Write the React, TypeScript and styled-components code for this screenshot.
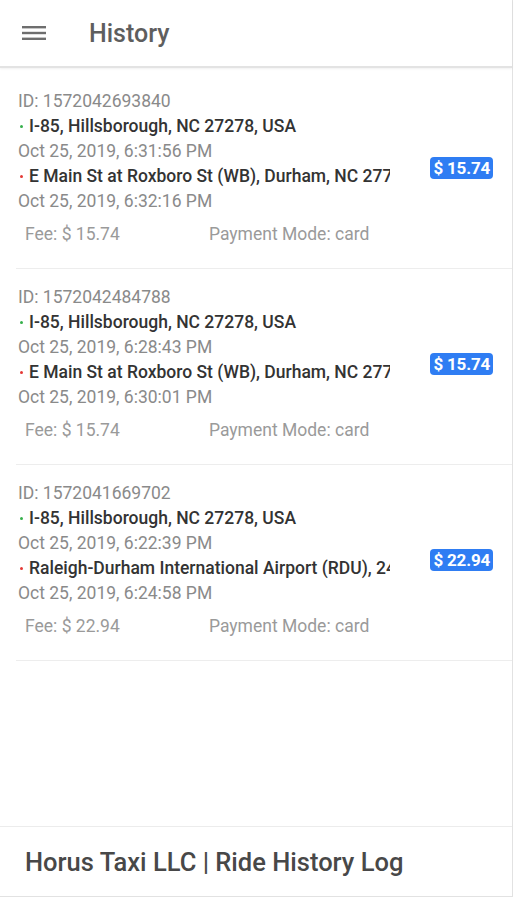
import styled, { createGlobalStyle } from "styled-components";

const GlobalStyle = createGlobalStyle`
  html, body {
    margin: 0;
    padding: 0;
    background: #fff;
  }
  body {
    font-family: Roboto, "Liberation Sans", sans-serif;
  }
`;

type Ride = {
  id: string;
  origin: string;
  pickedAt: string;
  destination: string;
  droppedAt: string;
  fee: string;
  mode: string;
};

const rides: Ride[] = [
  {
    id: "1572042693840",
    origin: "I-85, Hillsborough, NC 27278, USA",
    pickedAt: "Oct 25, 2019, 6:31:56 PM",
    destination: "E Main St at Roxboro St (WB), Durham, NC 27701, USA",
    droppedAt: "Oct 25, 2019, 6:32:16 PM",
    fee: "15.74",
    mode: "card",
  },
  {
    id: "1572042484788",
    origin: "I-85, Hillsborough, NC 27278, USA",
    pickedAt: "Oct 25, 2019, 6:28:43 PM",
    destination: "E Main St at Roxboro St (WB), Durham, NC 27701, USA",
    droppedAt: "Oct 25, 2019, 6:30:01 PM",
    fee: "15.74",
    mode: "card",
  },
  {
    id: "1572041669702",
    origin: "I-85, Hillsborough, NC 27278, USA",
    pickedAt: "Oct 25, 2019, 6:22:39 PM",
    destination: "Raleigh-Durham International Airport (RDU), 2400 John Brantley Blvd",
    droppedAt: "Oct 25, 2019, 6:24:58 PM",
    fee: "22.94",
    mode: "card",
  },
];

const Shell = styled.div`
  width: 512px;
  height: 896px;
  display: flex;
  flex-direction: column;
  border-right: 1px solid #e2e2e2;
  border-bottom: 1px solid #e2e2e2;
  background: #fff;
`;

const Header = styled.header`
  height: 66px;
  flex-shrink: 0;
  display: flex;
  align-items: center;
  gap: 43px;
  padding-left: 22px;
  border-bottom: 2px solid #e3e3e3;
  box-shadow: 0 1px 2px rgba(0, 0, 0, 0.06);
`;

const MenuButton = styled.button`
  border: 0;
  background: none;
  padding: 0;
  width: 24px;
  height: 24px;
  display: flex;
  align-items: center;
  justify-content: center;
  color: #6e6e6e;
  cursor: pointer;
`;

const Title = styled.h1`
  margin: 0;
  font-size: 25px;
  font-weight: 500;
  color: #5e5e5e;
`;

const List = styled.main`
  flex: 1;
  padding-top: 5px;
  overflow: hidden;
`;

const Item = styled.div`
  margin-left: 16px;
  padding: 16px 19px 21px 2px;
  display: flex;
  align-items: center;
  border-bottom: 1px solid #ededed;
`;

const Details = styled.div`
  flex: 1;
  min-width: 0;
`;

const Line = styled.div<{ strong?: boolean }>`
  height: 25px;
  line-height: 25px;
  font-size: 17.5px;
  white-space: nowrap;
  overflow: hidden;
  color: ${({ strong }) => (strong ? "#333" : "#8a8a8a")};
  font-weight: ${({ strong }) => (strong ? 500 : 400)};
`;

const Place = styled(Line)`
  width: 372px;
  display: flex;
  align-items: center;
`;

const Dot = styled.span<{ color: string }>`
  width: 3px;
  height: 3px;
  border-radius: 50%;
  margin: 0 6px 0 2px;
  flex-shrink: 0;
  background: ${({ color }) => color};
`;

const Meta = styled.div`
  margin-top: 8px;
  padding-left: 7px;
  display: flex;
  font-size: 17.5px;
  line-height: 25px;
  color: #9a9a9a;
`;

const Fee = styled.span`
  width: 184px;
`;

const Badge = styled.span`
  flex-shrink: 0;
  background: #2f7df3;
  color: #fff;
  font-size: 17px;
  font-weight: 700;
  line-height: 22px;
  padding: 0 3px;
  border-radius: 4px;
  letter-spacing: -0.2px;
`;

const Footer = styled.footer`
  height: 69px;
  flex-shrink: 0;
  display: flex;
  align-items: center;
  padding-left: 25px;
  border-top: 1px solid #ececec;
  font-size: 25.5px;
  font-weight: 500;
  color: #484848;
`;

function MenuIcon() {
  return (
    <svg width="24" height="24" viewBox="0 0 24 24" fill="currentColor">
      <rect x="0" y="5" width="24" height="2.4" />
      <rect x="0" y="10.8" width="24" height="2.4" />
      <rect x="0" y="16.6" width="24" height="2.4" />
    </svg>
  );
}

function RideItem({ ride }: { ride: Ride }) {
  return (
    <Item>
      <Details>
        <Line>ID: {ride.id}</Line>
        <Place strong>
          <Dot color="#36b04b" />
          {ride.origin}
        </Place>
        <Line>{ride.pickedAt}</Line>
        <Place strong>
          <Dot color="#e53935" />
          {ride.destination}
        </Place>
        <Line>{ride.droppedAt}</Line>
        <Meta>
          <Fee>Fee: $ {ride.fee}</Fee>
          <span>Payment Mode: {ride.mode}</span>
        </Meta>
      </Details>
      <Badge>$ {ride.fee}</Badge>
    </Item>
  );
}

export default function App() {
  return (
    <>
      <GlobalStyle />
      <Shell>
        <Header>
          <MenuButton aria-label="menu">
            <MenuIcon />
          </MenuButton>
          <Title>History</Title>
        </Header>
        <List>
          {rides.map((ride) => (
            <RideItem key={ride.id} ride={ride} />
          ))}
        </List>
        <Footer>Horus Taxi LLC | Ride History Log</Footer>
      </Shell>
    </>
  );
}
